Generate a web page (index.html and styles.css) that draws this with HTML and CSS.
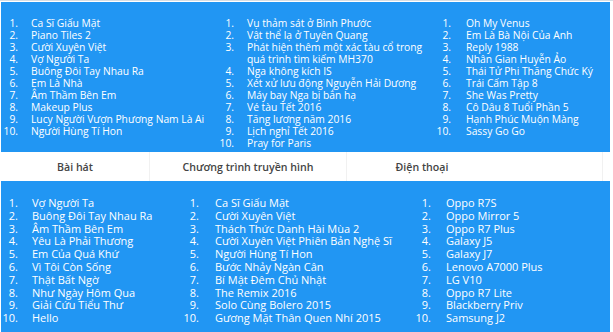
FILE: index.html
```html
<!DOCTYPE html>
<html lang="vi">
<head>
<meta charset="utf-8">
<link rel="stylesheet" href="styles.css">
</head>
<body>
<div class="page">
  <section class="panel panel-top">
    <ol class="list col-a">
      <li><span class="n">1.</span><span class="t">Ca Sĩ Giấu Mặt</span></li>
      <li><span class="n">2.</span><span class="t">Piano Tiles 2</span></li>
      <li><span class="n">3.</span><span class="t">Cười Xuyên Việt</span></li>
      <li><span class="n">4.</span><span class="t">Vợ Người Ta</span></li>
      <li><span class="n">5.</span><span class="t">Buông Đôi Tay Nhau Ra</span></li>
      <li><span class="n">6.</span><span class="t">Em Là Nhà</span></li>
      <li><span class="n">7.</span><span class="t">Âm Thầm Bên Em</span></li>
      <li><span class="n">8.</span><span class="t">Makeup Plus</span></li>
      <li><span class="n">9.</span><span class="t">Lucy Người Vượn Phương Nam Là Ai</span></li>
      <li><span class="n">10.</span><span class="t">Người Hùng Tí Hon</span></li>
    </ol>
    <ol class="list col-b">
      <li><span class="n">1.</span><span class="t">Vụ thảm sát ở Bình Phước</span></li>
      <li><span class="n">2.</span><span class="t">Vật thể lạ ở Tuyên Quang</span></li>
      <li><span class="n">3.</span><span class="t">Phát hiện thêm một xác tàu cổ trong quá trình tìm kiếm MH370</span></li>
      <li><span class="n">4.</span><span class="t">Nga không kích IS</span></li>
      <li><span class="n">5.</span><span class="t">Xét xử lưu động Nguyễn Hải Dương</span></li>
      <li><span class="n">6.</span><span class="t">Máy bay Nga bị bắn hạ</span></li>
      <li><span class="n">7.</span><span class="t">Vé tàu Tết 2016</span></li>
      <li><span class="n">8.</span><span class="t">Tăng lương năm 2016</span></li>
      <li><span class="n">9.</span><span class="t">Lịch nghỉ Tết 2016</span></li>
      <li><span class="n">10.</span><span class="t">Pray for Paris</span></li>
    </ol>
    <ol class="list col-c">
      <li><span class="n">1.</span><span class="t">Oh My Venus</span></li>
      <li><span class="n">2.</span><span class="t">Em Là Bà Nội Của Anh</span></li>
      <li><span class="n">3.</span><span class="t">Reply 1988</span></li>
      <li><span class="n">4.</span><span class="t">Nhân Gian Huyễn Ảo</span></li>
      <li><span class="n">5.</span><span class="t">Thái Tử Phi Thăng Chức Ký</span></li>
      <li><span class="n">6.</span><span class="t">Trái Cấm Tập 8</span></li>
      <li><span class="n">7.</span><span class="t">She Was Pretty</span></li>
      <li><span class="n">8.</span><span class="t">Cô Dâu 8 Tuổi Phần 5</span></li>
      <li><span class="n">9.</span><span class="t">Hạnh Phúc Muộn Màng</span></li>
      <li><span class="n">10.</span><span class="t">Sassy Go Go</span></li>
    </ol>
  </section>

  <div class="heads">
    <div class="head h1">Bài hát</div>
    <div class="head h2">Chương trình truyền hình</div>
    <div class="head h3">Điện thoại</div>
    <div class="head h4"></div>
  </div>

  <section class="panel panel-bottom">
    <ol class="list col-d">
      <li><span class="n">1.</span><span class="t">Vợ Người Ta</span></li>
      <li><span class="n">2.</span><span class="t">Buông Đôi Tay Nhau Ra</span></li>
      <li><span class="n">3.</span><span class="t">Âm Thầm Bên Em</span></li>
      <li><span class="n">4.</span><span class="t">Yêu Là Phải Thương</span></li>
      <li><span class="n">5.</span><span class="t">Em Của Quá Khứ</span></li>
      <li><span class="n">6.</span><span class="t">Vì Tôi Còn Sống</span></li>
      <li><span class="n">7.</span><span class="t">Thật Bất Ngờ</span></li>
      <li><span class="n">8.</span><span class="t">Như Ngày Hôm Qua</span></li>
      <li><span class="n">9.</span><span class="t">Giải Cứu Tiểu Thư</span></li>
      <li><span class="n">10.</span><span class="t">Hello</span></li>
    </ol>
    <ol class="list col-e">
      <li><span class="n">1.</span><span class="t">Ca Sĩ Giấu Mặt</span></li>
      <li><span class="n">2.</span><span class="t">Cười Xuyên Việt</span></li>
      <li><span class="n">3.</span><span class="t">Thách Thức Danh Hài Mùa 2</span></li>
      <li><span class="n">4.</span><span class="t">Cười Xuyên Việt Phiên Bản Nghệ Sĩ</span></li>
      <li><span class="n">5.</span><span class="t">Người Hùng Tí Hon</span></li>
      <li><span class="n">6.</span><span class="t">Bước Nhảy Ngàn Cân</span></li>
      <li><span class="n">7.</span><span class="t">Bí Mật Đêm Chủ Nhật</span></li>
      <li><span class="n">8.</span><span class="t">The Remix 2016</span></li>
      <li><span class="n">9.</span><span class="t">Solo Cùng Bolero 2015</span></li>
      <li><span class="n">10.</span><span class="t">Gương Mặt Thân Quen Nhí 2015</span></li>
    </ol>
    <ol class="list col-f">
      <li><span class="n">1.</span><span class="t">Oppo R7S</span></li>
      <li><span class="n">2.</span><span class="t">Oppo Mirror 5</span></li>
      <li><span class="n">3.</span><span class="t">Oppo R7 Plus</span></li>
      <li><span class="n">4.</span><span class="t">Galaxy J5</span></li>
      <li><span class="n">5.</span><span class="t">Galaxy J7</span></li>
      <li><span class="n">6.</span><span class="t">Lenovo A7000 Plus</span></li>
      <li><span class="n">7.</span><span class="t">LG V10</span></li>
      <li><span class="n">8.</span><span class="t">Oppo R7 Lite</span></li>
      <li><span class="n">9.</span><span class="t">Blackberry Priv</span></li>
      <li><span class="n">10.</span><span class="t">Samsung J2</span></li>
    </ol>
  </section>
</div>
</body>
</html>
```

FILE: styles.css
```css
html, body {
  margin: 0;
  padding: 0;
  background: #ffffff;
}

body {
  font-family: "Open Sans", "DejaVu Sans", sans-serif;
  width: 613px;
  height: 332px;
  overflow: hidden;
}

.page {
  border-top: 1px solid #d7dde3;
  padding: 1px 3px 0 1px;
}

.panel {
  background: #2196f3;
  color: #ffffff;
  display: flex;
  align-items: flex-start;
}

.panel-top {
  height: 150px;
  padding-top: 15px;
  box-sizing: border-box;
}

.panel-bottom {
  height: 151px;
  padding-top: 16px;
  box-sizing: border-box;
}

.list {
  list-style: none;
  margin: 0;
  padding: 0;
  font-size: 10.3px;
  line-height: 12px;
}

.panel-bottom .list {
  font-size: 11px;
  line-height: 12.8px;
}

.list li {
  display: flex;
  align-items: flex-start;
}

.n {
  flex: none;
  text-align: right;
}

.t {
  white-space: nowrap;
}

/* top columns */
.col-a { width: 200px; flex: none; }
.col-a .n { width: 17px; margin-right: 13px; }

.col-b { width: 230px; flex: none; }
.col-b .n { width: 33px; margin-right: 13px; }
.col-b .t { white-space: normal; width: 184px; flex: none; }

.col-c { flex: 1; }
.col-c .n { width: 20px; margin-right: 15px; }

/* bottom columns */
.col-d { width: 180px; flex: none; }
.col-d .n { width: 17px; margin-right: 14px; }

.col-e { width: 232px; flex: none; }
.col-e .n { width: 18px; margin-right: 16px; }

.col-f { flex: 1; }
.col-f .n { width: 18px; margin-right: 15px; }

/* header row */
.heads {
  display: grid;
  grid-template-columns: 149px 197px 150px 106px 1fr;
  height: 29px;
  align-items: stretch;
  background: #ffffff;
}

.head {
  display: flex;
  align-items: center;
  justify-content: center;
  font-size: 10.6px;
  font-weight: 600;
  color: #444444;
}

.h1, .h2 {
  border-right: 1px solid #f1f1f1;
}

.h4 {
  border-right: 1px solid #f1f1f1;
}
```
